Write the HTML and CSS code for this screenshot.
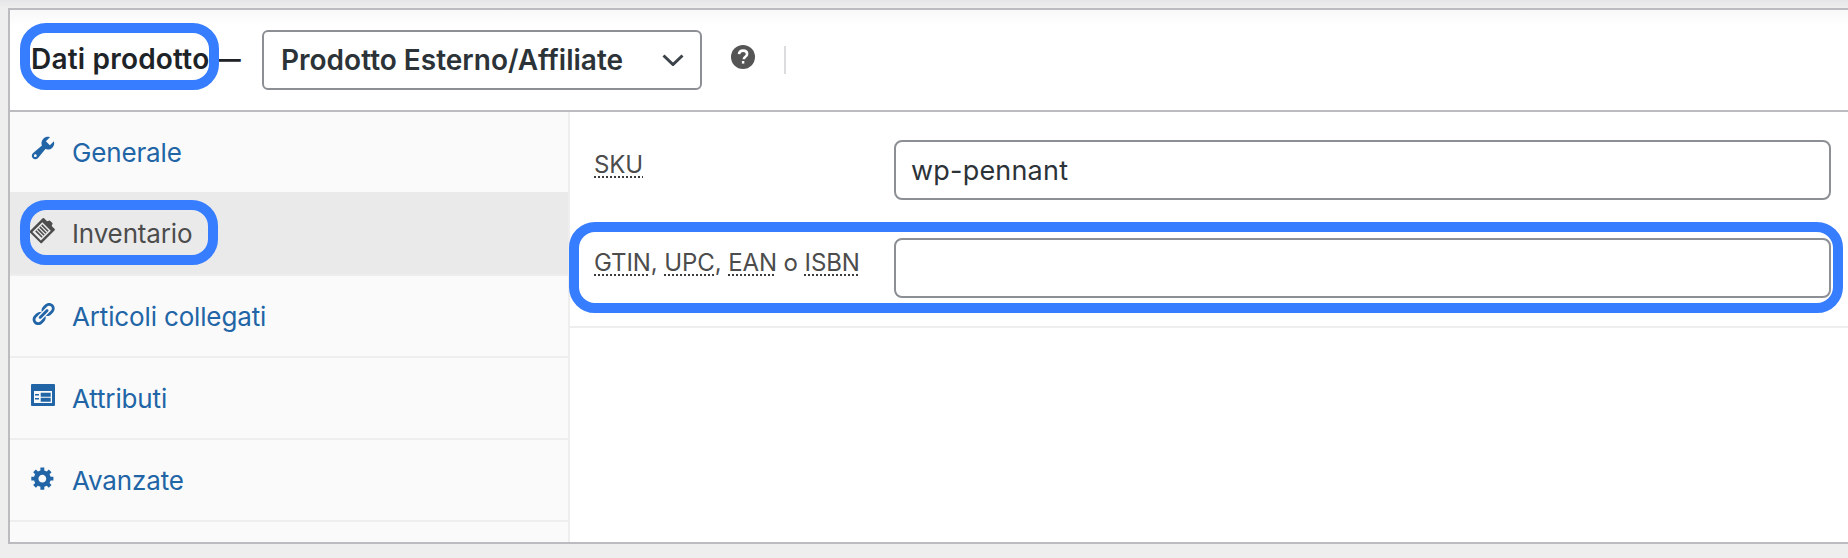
FILE: index.html
```html
<!DOCTYPE html>
<html lang="it">
<head>
<meta charset="utf-8">
<title>Dati prodotto</title>
<link rel="stylesheet" href="styles.css">
</head>
<body>
<section class="panel">
  <header class="panel-head">
    <h2 class="panel-title"><span class="marked marked-title">Dati prodotto</span> <span class="title-dash">—</span></h2>
    <div class="select">
      <span>Prodotto Esterno/Affiliate</span>
      <svg class="chevron" viewBox="0 0 22 12"><path d="M1.5 1.5 11 10.5 20.5 1.5"/></svg>
    </div>
    <svg class="help" viewBox="0 0 24 24">
      <circle cx="12" cy="12" r="12"/>
      <path class="help-q" d="M8 9.2c.2-2.3 1.8-3.6 4.1-3.6 2.4 0 4 1.4 4 3.3 0 1.5-.8 2.3-2 3.1-1 .7-1.2 1.1-1.2 2.2"/>
      <rect class="help-dot" x="10.9" y="16" width="2.4" height="2.6"/>
    </svg>
    <span class="divider"></span>
  </header>
  <div class="panel-body">
    <nav class="tabs">
      <a class="tab tab-first">
        <svg class="tab-icon icon-raised" viewBox="0 0 20 20"><path d="M16.68 9.77c-1.34 1.34-3.3 1.67-4.95.99l-5.41 6.52c-.99.99-2.59.99-3.58 0s-.99-2.59 0-3.58l6.52-5.42c-.68-1.65-.35-3.61.99-4.95 1.28-1.28 3.12-1.62 4.72-1.06l-2.89 2.89 2.82 2.82 2.86-2.87c.53 1.58.18 3.39-1.08 4.66zM3.81 16.21c.4.39 1.04.39 1.43 0 .4-.4.4-1.04 0-1.44-.39-.39-1.03-.39-1.43 0-.39.4-.39 1.04 0 1.44z"/></svg>
        <span>Generale</span>
      </a>
      <a class="tab tab-active">
        <span class="marked marked-tab"></span>
        <svg class="tab-icon icon-clip" viewBox="0 0 28 28">
          <g transform="rotate(45 14 14)">
            <path fill-rule="evenodd" d="M6.5 5h4.2l1.3-2.6h4l1.3 2.6h4.2a1 1 0 0 1 1 1v18a1 1 0 0 1-1 1h-15a1 1 0 0 1-1-1V6a1 1 0 0 1 1-1zM8 9v14h12V9z"/>
            <path d="M9.5 10.5h9v1.6h-9zM9.5 13.3h9v1.6h-9zM9.5 16.1h9v1.6h-9zM9.5 18.9h9v1.6h-9z"/>
          </g>
        </svg>
        <span>Inventario</span>
      </a>
      <a class="tab">
        <svg class="tab-icon icon-small" viewBox="0 0 20 20"><path d="M17.74 2.76c1.68 1.69 1.68 4.41 0 6.1l-1.53 1.52c-1.12 1.12-2.7 1.47-4.14 1.09l2.62-2.61.76-.77.76-.76c.84-.84.84-2.2 0-3.04-.84-.85-2.2-.85-3.04 0l-.77.76-3.38 3.38c-.37-1.44-.02-3.02 1.1-4.14l1.52-1.53c1.69-1.68 4.42-1.68 6.1 0zM8.59 13.43l5.34-5.34c.42-.42.42-1.1 0-1.52-.44-.43-1.13-.39-1.53 0l-5.33 5.34c-.42.42-.42 1.1 0 1.52.44.43 1.13.39 1.52 0zm-.76 2.29l4.14-4.15c.38 1.44.03 3.02-1.09 4.14l-1.52 1.53c-1.69 1.68-4.41 1.68-6.1 0-1.68-1.68-1.68-4.42 0-6.1l1.53-1.52c1.12-1.12 2.7-1.47 4.14-1.1l-4.14 4.15c-.85.84-.85 2.2 0 3.05.84.84 2.2.84 3.04 0z"/></svg>
        <span>Articoli collegati</span>
      </a>
      <a class="tab">
        <svg class="tab-icon" viewBox="0 0 28 28">
          <path fill-rule="evenodd" d="M3 2h22a1 1 0 0 1 1 1v20a1 1 0 0 1-1 1H3a1 1 0 0 1-1-1V3a1 1 0 0 1 1-1zM5 9v12h18V9z"/>
          <path d="M6 12h4v1.4H6zM11.7 10.7h10v4h-10zM6 16h4v1.4H6zM11.7 15.7h10v4h-10z"/>
        </svg>
        <span>Attributi</span>
      </a>
      <a class="tab">
        <svg class="tab-icon icon-small" viewBox="0 0 20 20"><path d="M18 12h-2.18c-.17.7-.44 1.35-.81 1.93l1.54 1.54-2.1 2.1-1.54-1.54c-.58.36-1.23.63-1.91.79V19H8v-2.18c-.68-.16-1.33-.43-1.91-.79l-1.54 1.54-2.12-2.12 1.54-1.54c-.36-.58-.63-1.23-.79-1.91H1V9.03h2.17c.16-.7.44-1.35.8-1.94L2.43 5.55l2.1-2.1 1.54 1.54c.58-.37 1.24-.64 1.93-.81V2h3v2.18c.68.16 1.33.43 1.91.79l1.54-1.54 2.12 2.12-1.54 1.54c.36.59.64 1.24.8 1.94H18V12zm-8.5 1.5c1.66 0 3-1.34 3-3s-1.34-3-3-3-3 1.34-3 3 1.34 3 3 3z"/></svg>
        <span>Avanzate</span>
      </a>
    </nav>
    <div class="fields">
      <div class="field">
        <label class="field-label"><u>SKU</u></label>
        <input class="field-input" type="text" value="wp-pennant">
      </div>
      <div class="field field-last">
        <span class="marked marked-field"></span>
        <label class="field-label"><u>GTIN</u>, <u>UPC</u>, <u>EAN</u> o <u>ISBN</u></label>
        <input class="field-input" type="text">
      </div>
    </div>
  </div>
</section>
</body>
</html>
```
FILE: styles.css
```css
*, *::before, *::after { box-sizing: border-box; }

html, body { margin: 0; height: 100%; }

body {
  padding: 8px 0 14px 8px;
  background: linear-gradient(#e6e6e8, #eeeeef 8px);
  font-family: Inter, "Noto Sans", sans-serif;
  overflow: hidden;
}

.panel {
  height: 536px;
  border: 2px solid #bcbcc0;
  border-right: 0;
  background: #fff;
  display: flex;
  flex-direction: column;
}

.panel-head {
  height: 102px;
  flex: none;
  padding-left: 21px;
  display: flex;
  align-items: center;
  border-bottom: 2px solid #bcbcc0;
  background: linear-gradient(#f8f8f8, #fff 16px);
}

.panel-title {
  margin: 0 0 2px;
  width: 231px;
  flex: none;
  font-size: 28px;
  font-weight: 600;
  letter-spacing: 0.2px;
  color: #1d2327;
  white-space: nowrap;
}

.title-dash {
  margin-left: -2px;
  font-size: 26px;
  font-weight: 600;
  vertical-align: 1px;
}

.marked {
  position: absolute;
  border: 10px solid #377dff;
  pointer-events: none;
}

.marked-title {
  position: relative;
  display: inline-block;
  border: 0;
}

.marked-title::after {
  content: "";
  position: absolute;
  left: -11px;
  right: -10px;
  top: -19px;
  height: 67px;
  border: 10px solid #377dff;
  border-radius: 26px;
}

.select {
  width: 440px;
  height: 60px;
  flex: none;
  padding: 0 16px 0 17px;
  display: flex;
  align-items: center;
  justify-content: space-between;
  border: 2px solid #8c8f94;
  border-radius: 6px;
  background: #fff;
  font-size: 28px;
  font-weight: 600;
  color: #2c3338;
  white-space: nowrap;
}

.chevron {
  width: 22px;
  height: 12px;
  fill: none;
  stroke: #3c434a;
  stroke-width: 3;
}

.help {
  width: 24px;
  height: 24px;
  flex: none;
  margin: -6px 0 0 29px;
  fill: #555;
}

.help-q { fill: none; stroke: #fff; stroke-width: 2.6; }
.help-dot { fill: #fff; }

.divider {
  width: 2px;
  height: 28px;
  flex: none;
  margin-left: 29px;
  background: #dcdcde;
}

.panel-body {
  flex: 1;
  display: flex;
  min-height: 0;
}

.tabs {
  width: 560px;
  flex: none;
  display: flex;
  flex-direction: column;
  border-right: 2px solid #eeeeee;
  background: #fafafa;
}

.tab {
  position: relative;
  height: 82px;
  flex: none;
  padding-left: 19px;
  display: flex;
  align-items: center;
  gap: 15px;
  border-bottom: 2px solid #eeeeee;
  font-size: 26px;
  letter-spacing: -0.15px;
  color: #2165a6;
}

.tab-first {
  height: 80px;
  border-bottom: 0;
}

.tab-active {
  height: 84px;
  background: #eaeaeb;
  color: #4c4c4c;
}

.tab-icon {
  width: 28px;
  height: 28px;
  flex: none;
  margin-top: -4px;
  fill: currentColor;
}

.icon-raised { margin-top: -8px; }
.icon-clip { margin-top: -6px; }

.icon-small {
  width: 26px;
  height: 26px;
  margin: -4px 1px 0;
}

.marked-tab {
  left: 10px;
  top: 8px;
  width: 198px;
  height: 65px;
  border-radius: 26px;
}

.fields {
  flex: 1;
  min-width: 0;
}

.field {
  position: relative;
  height: 98px;
  padding: 28px 17px 0 24px;
  display: flex;
  align-items: flex-start;
}

.field-last {
  height: 118px;
  border-bottom: 2px solid #eeeeee;
}

.marked-field {
  left: -1px;
  right: 5px;
  top: 12px;
  height: 91px;
  border-radius: 26px;
}

.field-label {
  width: 300px;
  flex: none;
  padding-top: 11px;
  font-size: 24px;
  letter-spacing: -0.1px;
  line-height: 28px;
  color: #4c4c4c;
}

.field-label u {
  text-decoration: underline dotted 2px #3c3c3c;
  text-underline-offset: 3px;
  text-decoration-skip-ink: none;
}

.field-input {
  flex: 1;
  min-width: 0;
  height: 60px;
  padding: 0 15px;
  border: 2px solid #8c8f94;
  border-radius: 8px;
  background: #fff;
  font: 400 27px Inter, "Noto Sans", sans-serif;
  letter-spacing: 0.2px;
  color: #2c3338;
}
```
